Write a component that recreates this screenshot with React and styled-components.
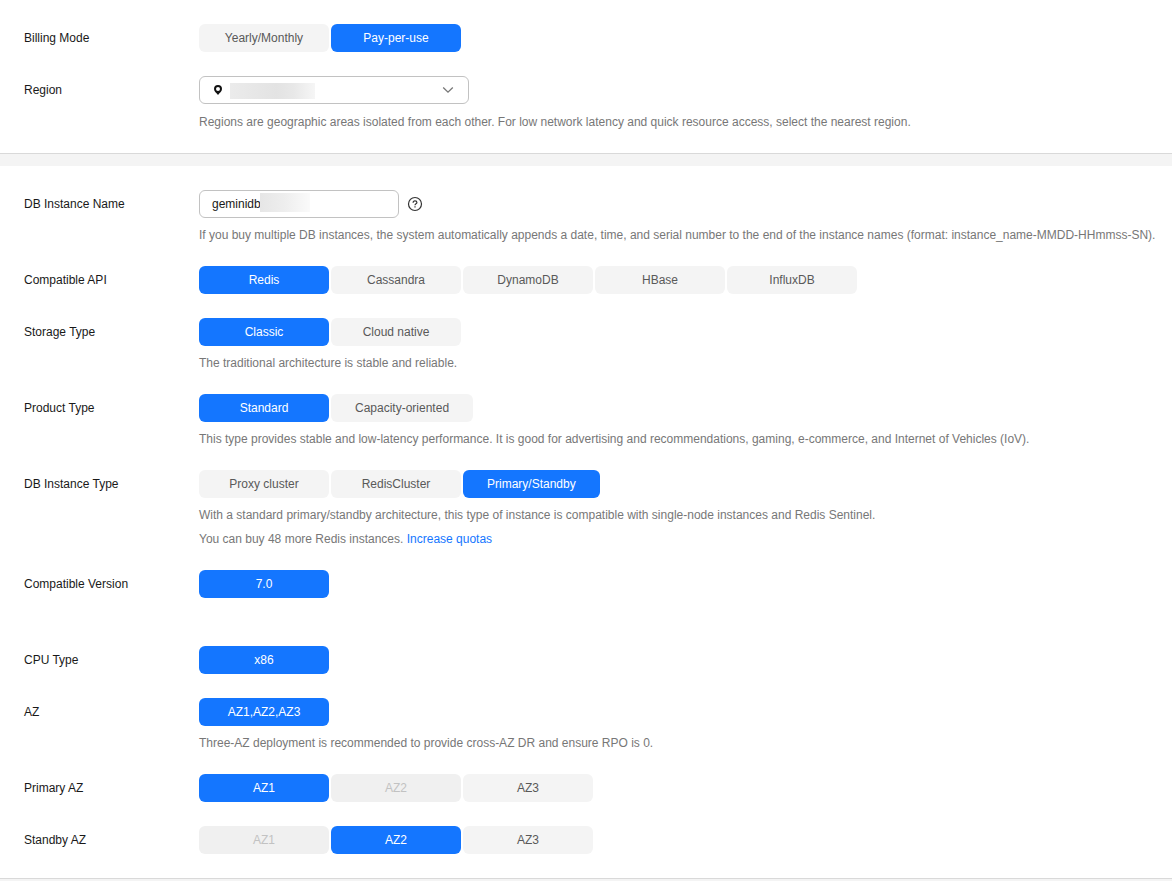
import { useState } from "react";
import styled, { createGlobalStyle } from "styled-components";

const GlobalStyle = createGlobalStyle`
  * {
    box-sizing: border-box;
  }
  body {
    margin: 0;
    background: #f4f4f4;
    color: #191919;
    font-family: "Liberation Sans", Arial, sans-serif;
    font-size: 12px;
    line-height: 14px;
  }
`;

const Page = styled.main`
  display: flex;
  flex-direction: column;
  gap: 12px;
`;
const Section = styled.section`
  display: flex;
  flex-direction: column;
  gap: 24px;
  padding: 24px 16px 24px 24px;
  border-bottom: 1px solid #d9d9d9;
  background: #fff;
`;
const Row = styled.div`
  display: flex;
  align-items: flex-start;
`;
const Title = styled.label`
  flex: 0 0 175px;
  line-height: 28px;
`;
const Content = styled.div`
  flex: 1;
  min-width: 0;
`;
const Hint = styled.p`
  min-height: 14px;
  margin: 10px 0 0;
  color: #777;
`;
const Link = styled.a`
  color: #1476ff;
  text-decoration: none;
`;

const Group = styled.div`
  display: flex;
  flex-wrap: wrap;
  gap: 2px;
`;
const Option = styled.button`
  min-width: 130px;
  height: 28px;
  padding: 0 24px;
  border: none;
  border-radius: 6px;
  background: ${(props) => (props.$active ? "#1476ff" : "#f4f4f4")};
  color: ${(props) => (props.$active ? "#fff" : "#595959")};
  font: inherit;
  cursor: pointer;

  &:disabled {
    background: #f0f0f0;
    color: #c2c2c2;
    cursor: not-allowed;
  }
`;

const SelectBox = styled.div`
  position: relative;
  width: 270px;
  margin-bottom: 11px;
`;
const Select = styled.select`
  display: block;
  width: 100%;
  height: 28px;
  padding: 0 32px;
  border: 1px solid #c2c2c2;
  border-radius: 6px;
  background: #fff;
  color: #191919;
  font: inherit;
  appearance: none;
`;
const PinIcon = styled.svg`
  position: absolute;
  top: 8px;
  left: 14px;
  pointer-events: none;
`;
const ArrowIcon = styled.svg`
  position: absolute;
  top: 10px;
  right: 14px;
  pointer-events: none;
`;
const RegionMask = styled.span`
  position: absolute;
  top: 7px;
  left: 31px;
  width: 85px;
  height: 16px;
  background: linear-gradient(90deg, #ebebeb, #e3e3e3 55%, #e8e8e8 75%, #f6f6f6);
  pointer-events: none;
`;

const NameLine = styled.div`
  display: flex;
  align-items: center;
  gap: 8px;
`;
const InputBox = styled.div`
  position: relative;
  width: 200px;
`;
const Input = styled.input`
  display: block;
  width: 100%;
  height: 28px;
  padding: 0 12px;
  border: 1px solid #c2c2c2;
  border-radius: 6px;
  color: #191919;
  font: inherit;
`;
const NameMask = styled.span`
  position: absolute;
  top: 3px;
  left: 61px;
  width: 50px;
  height: 19px;
  background: linear-gradient(90deg, #e6e6e6, #eeeeee 50%, #fafafa);
  pointer-events: none;
`;
const HelpButton = styled.button`
  display: flex;
  padding: 0;
  border: none;
  background: none;
  color: #333;
  cursor: pointer;
`;

function Choice({ title, options, selected, disabled, children }) {
  const [value, setValue] = useState(selected);
  const id = title.toLowerCase().replace(/ /g, "-");

  return (
    <Row>
      <Title as="span" id={id}>
        {title}
      </Title>
      <Content>
        <Group role="group" aria-labelledby={id}>
          {options.map((option) => (
            <Option
              key={option}
              type="button"
              $active={option === value}
              aria-pressed={option === value}
              disabled={option === disabled}
              onClick={() => setValue(option)}
            >
              {option}
            </Option>
          ))}
        </Group>
        {children}
      </Content>
    </Row>
  );
}

function App() {
  const [name, setName] = useState("geminidb");

  return (
    <>
      <GlobalStyle />
      <Page>
        <Section>
          <Choice
            title="Billing Mode"
            options={["Yearly/Monthly", "Pay-per-use"]}
            selected="Pay-per-use"
          />
          <Row>
            <Title htmlFor="region">Region</Title>
            <Content>
              <SelectBox>
                <Select id="region">
                  <option value="default"></option>
                </Select>
                <PinIcon width="10" height="12" viewBox="0 0 10 12">
                  <path
                    d="M5 1a4 4 0 0 0-4 4c0 2.4 2.6 4 4 6 1.4-2 4-3.6 4-6a4 4 0 0 0-4-4Zm0 2.1a2 2 0 1 1 0 4 2 2 0 0 1 0-4Z"
                    fill="#111"
                    fillRule="evenodd"
                  />
                </PinIcon>
                <RegionMask />
                <ArrowIcon width="14" height="8" viewBox="0 0 14 8">
                  <path
                    d="M2.2 1.5L7 6.2l4.8-4.7"
                    fill="none"
                    stroke="#777"
                    strokeWidth="1.3"
                  />
                </ArrowIcon>
              </SelectBox>
              <Hint>
                Regions are geographic areas isolated from each other. For low
                network latency and quick resource access, select the nearest
                region.
              </Hint>
            </Content>
          </Row>
        </Section>

        <Section>
          <Row>
            <Title htmlFor="name">DB Instance Name</Title>
            <Content>
              <NameLine>
                <InputBox>
                  <Input
                    id="name"
                    type="text"
                    value={name}
                    onChange={(e) => setName(e.target.value)}
                  />
                  <NameMask />
                </InputBox>
                <HelpButton type="button" aria-label="Help">
                  <svg width="16" height="16" viewBox="0 0 16 16" fill="none">
                    <circle cx="8" cy="8" r="6.5" stroke="currentColor" strokeWidth="1.2" />
                    <path
                      d="M6.1 6.7c0-1.2.8-1.9 1.9-1.9s1.9.7 1.9 1.7c0 1.3-1.9 1.4-1.9 2.8"
                      stroke="currentColor"
                      strokeWidth="1.2"
                    />
                    <path d="M8 10.2v1.3" stroke="currentColor" strokeWidth="1.2" />
                  </svg>
                </HelpButton>
              </NameLine>
              <Hint>
                If you buy multiple DB instances, the system automatically
                appends a date, time, and serial number to the end of the
                instance names (format: instance_name-MMDD-HHmmss-SN).
              </Hint>
            </Content>
          </Row>
          <Choice
            title="Compatible API"
            options={["Redis", "Cassandra", "DynamoDB", "HBase", "InfluxDB"]}
            selected="Redis"
          />
          <Choice
            title="Storage Type"
            options={["Classic", "Cloud native"]}
            selected="Classic"
          >
            <Hint>The traditional architecture is stable and reliable.</Hint>
          </Choice>
          <Choice
            title="Product Type"
            options={["Standard", "Capacity-oriented"]}
            selected="Standard"
          >
            <Hint>
              This type provides stable and low-latency performance. It is good
              for advertising and recommendations, gaming, e-commerce, and
              Internet of Vehicles (IoV).
            </Hint>
          </Choice>
          <Choice
            title="DB Instance Type"
            options={["Proxy cluster", "RedisCluster", "Primary/Standby"]}
            selected="Primary/Standby"
          >
            <Hint>
              With a standard primary/standby architecture, this type of
              instance is compatible with single-node instances and Redis
              Sentinel.
            </Hint>
            <Hint>
              You can buy 48 more Redis instances.{" "}
              <Link href="#quotas">Increase quotas</Link>
            </Hint>
          </Choice>
          <Choice title="Compatible Version" options={["7.0"]} selected="7.0">
            <Hint />
          </Choice>
          <Choice title="CPU Type" options={["x86"]} selected="x86" />
          <Choice title="AZ" options={["AZ1,AZ2,AZ3"]} selected="AZ1,AZ2,AZ3">
            <Hint>
              Three-AZ deployment is recommended to provide cross-AZ DR and
              ensure RPO is 0.
            </Hint>
          </Choice>
          <Choice
            title="Primary AZ"
            options={["AZ1", "AZ2", "AZ3"]}
            selected="AZ1"
            disabled="AZ2"
          />
          <Choice
            title="Standby AZ"
            options={["AZ1", "AZ2", "AZ3"]}
            selected="AZ2"
            disabled="AZ1"
          />
        </Section>
      </Page>
    </>
  );
}

export default App;
